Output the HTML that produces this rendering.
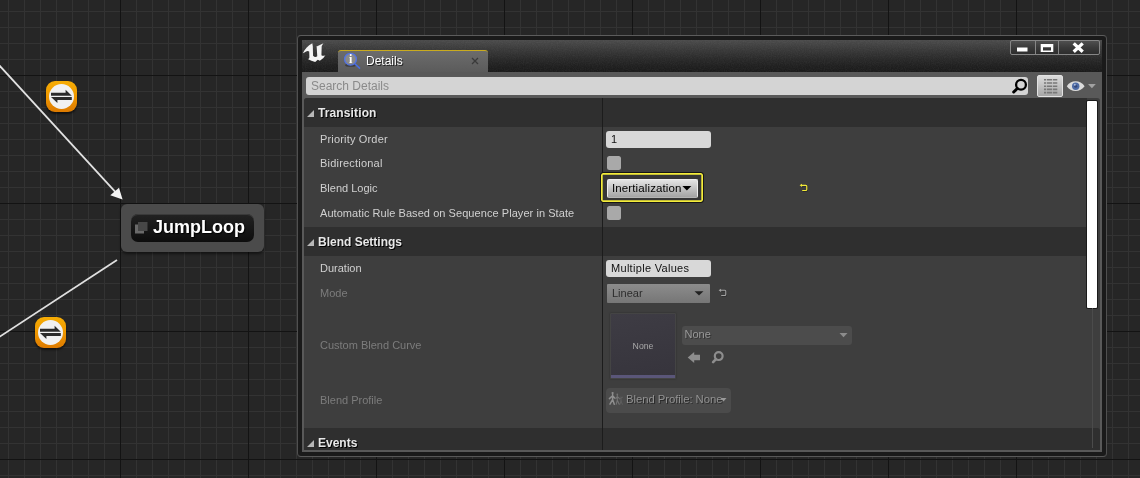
<!DOCTYPE html>
<html lang="en">
<head>
<meta charset="utf-8">
<title>Details</title>
<style>
*{box-sizing:border-box;margin:0;padding:0}
html,body{width:1140px;height:478px;overflow:hidden;background:#262626}
body{position:relative;font-family:"Liberation Sans",sans-serif;font-size:11px;color:#d6d6d6}
.abs{position:absolute}
#root{position:absolute;left:0;top:0;width:1140px;height:478px;overflow:hidden;will-change:transform}
#graph{position:absolute;left:0;top:0;width:1140px;height:478px;
 background-color:#262626;
 background-image:
  linear-gradient(to right,#131313 1px,transparent 1px),
  linear-gradient(to bottom,#131313 1px,transparent 1px),
  linear-gradient(to right,#333 1px,transparent 1px),
  linear-gradient(to bottom,#333 1px,transparent 1px);
 background-size:128px 128px,128px 128px,16px 16px,16px 16px;
 background-position:120px 0,0 75px,8px 0,0 11px;}
#wires{position:absolute;left:0;top:0}
.trans{position:absolute;width:31px;height:31px;border-radius:9px;
 background:linear-gradient(#f6ad05,#f09a00 45%,#dd7a00);box-shadow:0 2px 2px rgba(0,0,0,.55)}
.trans i{position:absolute;left:3px;top:3px;width:25px;height:25px;border-radius:50%;background:#f1f1f1}
.trans svg{position:absolute;left:0;top:0}
#node{position:absolute;left:121px;top:204px;width:143px;height:48px;border-radius:6px;background:#4b4b4b;box-shadow:0 2px 3px rgba(0,0,0,.5)}
#node .in{position:absolute;left:10px;top:10px;width:123px;height:28px;border-radius:7px;
 background:linear-gradient(#222,#0d0d0d);box-shadow:inset 0 1px 0 #3a3a3a}
#node .t{position:absolute;left:32px;top:11px;font-weight:bold;font-size:18px;line-height:24px;color:#fff;text-shadow:1px 1px 1px #000;white-space:nowrap}

#win{position:absolute;left:297px;top:35px;width:810px;height:422px;border:1px solid #505050;border-top-color:#5c5c5c;border-bottom-color:#585858;border-radius:4px;background:#1a1a1a}
#title{position:absolute;left:302px;top:40px;width:800px;height:32px;
 background:linear-gradient(#4b4b4b 0,#3a3a3a 9px,#292929 19px,#1e1e1e 27px,#1b1b1b 32px)}
#tab{position:absolute;left:338px;top:50px;width:150px;height:22px;border-radius:3px 3px 0 0;
 background:linear-gradient(#6c6c6c,#5b5b5b);border-top:1px solid #c9ab1f}
#tab .t{position:absolute;left:28px;top:3px;font-size:12px;line-height:14px;color:#fff;text-shadow:1px 1px 0 #222}
#content{position:absolute;left:302px;top:72px;width:800px;height:380px;background:#595959}
#search{position:absolute;left:306px;top:77px;width:722px;height:18px;border-radius:3px;background:#d4d4d4}
#search .t{position:absolute;left:5px;top:2px;font-size:12px;line-height:14px;color:#8a8a8a}
#table{position:absolute;left:304px;top:98px;width:796px;height:352px;background:#3e3e3e;border-radius:3px 3px 0 0;overflow:hidden}
#tin{position:absolute;left:0;top:1px;width:796px;height:351px}
.hdr{position:absolute;left:0;width:796px;background:#2f2f2f}
.hdr .t{position:absolute;left:14px;font-weight:bold;font-size:12px;line-height:16px;color:#e8e8e8;text-shadow:1px 1px 0 #000;white-space:nowrap}
.hdr .tri{position:absolute;left:3px;width:0;height:0;border-left:7px solid transparent;border-bottom:7px solid #b8b8b8}
.lbl{position:absolute;left:16px;font-size:11px;line-height:14px;color:#d0d0d0;white-space:nowrap}
.lbl.dis{color:#7c7c7c}
#divider{position:absolute;left:298px;top:-1px;width:1px;height:352px;background:#1c1c1c}
.inp{position:absolute;left:302px;width:105px;height:17px;border-radius:3px;background:#d8d8d8;color:#111;font-size:11px;line-height:17px;padding-left:5px;white-space:nowrap}
.chk{position:absolute;left:303px;width:14px;height:14px;border-radius:2.500px;background:#a9a9a9}

.wb{position:absolute;top:40px;height:15px;border:1px solid #868686;border-radius:2px;background:linear-gradient(#4f4f4f,#3a3a3a 50%,#2d2d2d)}
#lv{position:absolute;left:1037px;top:75px;width:26px;height:22px;border-radius:2px;border:1px solid #e2e2e2;background:linear-gradient(#dcdcdc,#a6a6a6)}
#sbar{position:absolute;left:783px;top:2px;width:10px;height:207px;background:#fff;border-radius:1px;box-shadow:0 0 0 1px #1a1a1a}
#strack{position:absolute;left:788px;top:209px;width:1px;height:140px;background:#4b4b4b;z-index:2}
#focus{position:absolute;left:296px;top:73px;width:104px;height:31px;border-radius:3px;background:#363636;border:1px solid #161616;box-shadow:inset 0 0 0 1.700px #f4ec3a}
#combo1{position:absolute;left:303px;top:80px;width:91px;height:19px;border-radius:2px;border:1px solid #ededed;border-bottom-color:#b5b5b5;background:linear-gradient(#e4e4e4,#a4a4a4);color:#000;font-size:11.5px;line-height:17px;padding-left:4px;letter-spacing:.12px;white-space:nowrap}
#combo2{position:absolute;left:303px;top:185px;width:103px;height:19px;border-radius:1px;background:linear-gradient(#8c8c8c,#767676);color:#2c2c2c;font-size:11px;line-height:19px;padding-left:5px;white-space:nowrap}
#thumb{position:absolute;left:306px;top:214px;width:66px;height:66px;background:#444;border-radius:1px;box-shadow:0 0 2px rgba(0,0,0,.35)}
#thumb .in{position:absolute;left:1px;top:1px;width:64px;height:64px;background:linear-gradient(170deg,#3e3c44,#36343c);}
#thumb .bar{position:absolute;left:1px;top:61.700px;width:64px;height:3.300px;background:#5a5679}
#thumb .t{position:absolute;left:0;top:27px;width:66px;text-align:center;font-size:8.700px;line-height:12px;color:#a9a9a9}
#combo3{position:absolute;left:378px;top:227px;width:170px;height:19px;border-radius:3px;background:#4c4c4c;color:#999;font-size:11px;line-height:17px;padding-left:2.500px;text-shadow:1px 1px 0 #333}
#bp{position:absolute;left:302px;top:289px;width:125px;height:25px;border-radius:4px;background:#4b4b4b;color:#929292;font-size:11.300px;letter-spacing:-.05px;line-height:22px;padding-left:20px;white-space:nowrap;text-shadow:1px 1px 0 #2a2a2a}
</style>
</head>
<body>
<div id="root">
<div id="graph"></div>
<svg id="wires" width="1140" height="478" viewBox="0 0 1140 478">
 <line x1="-1" y1="65" x2="116" y2="192.600" stroke="#e2e2e2" stroke-width="1.750"/>
 <polygon points="122.600,199.600 110.300,195.200 119,187.700" fill="#f4f4f4"/>
 <line x1="-1" y1="337.200" x2="117" y2="260" stroke="#e0e0e0" stroke-width="1.750"/>
</svg>

<div class="trans" style="left:46px;top:81px"><i></i>
 <svg width="31" height="31" viewBox="0 0 31 31"><path d="M5 11.800H19.600V8.800L25.800 14.800H5Z M25.800 16.100V19H11.400V21.900L5 16.100Z" fill="#2b2b2b"/></svg>
</div>
<div class="trans" style="left:35px;top:317px"><i></i>
 <svg width="31" height="31" viewBox="0 0 31 31"><path d="M5 11.800H19.600V8.800L25.800 14.800H5Z M25.800 16.100V19H11.400V21.900L5 16.100Z" fill="#2b2b2b"/></svg>
</div>

<div id="node">
 <div class="in"></div>
 <svg class="abs" style="left:14px;top:18px" width="13" height="12" viewBox="0 0 13 12"><rect x="0" y="2.500" width="9" height="9" fill="#6a6a6a"/><rect x="3" y="0" width="9.500" height="9" fill="#474747"/></svg>
 <div class="t">JumpLoop</div>
</div>

<div id="win"></div>
<div id="title"></div>
<svg class="abs" style="left:302px;top:40px" width="800" height="32" viewBox="0 0 800 32"><filter id="nz" x="0" y="0" width="100%" height="100%"><feTurbulence type="fractalNoise" baseFrequency="0.850" numOctaves="2" seed="3"/><feColorMatrix type="matrix" values="0 0 0 0 1  0 0 0 0 1  0 0 0 0 1  1.400 0 0 0 -0.450"/></filter><rect width="800" height="32" filter="url(#nz)" opacity=".06"/></svg>
<div id="tab"><div class="t">Details</div></div>

<svg class="abs" style="left:300px;top:40px" width="30" height="25" viewBox="0 0 574 478">
 <path d="M55,255 C85,180 150,105 235,62 L245,120 L250,300 Q290,345 330,310 L320,140 L310,130 Q380,95 450,62 Q420,100 415,120 L410,290 Q440,315 485,290 Q450,360 380,395 L340,380 L290,420 Q215,400 155,370 Q180,350 180,330 L176,222 Q150,195 115,220 Q85,238 55,255 Z" fill="#f4f4f4"/>
</svg>
<svg class="abs" style="left:338px;top:48px" width="30" height="25" viewBox="0 0 30 25">
 <ellipse cx="12.600" cy="17.200" rx="5.500" ry="1.600" fill="#222" opacity=".55"/>
 <circle cx="12.500" cy="11.200" r="5.900" fill="#8a8a8a" stroke="#5273e6" stroke-width="1.300"/>
 <path d="M16.900 15.900L21.600 20.100" stroke="#4a6de0" stroke-width="1.500" stroke-linecap="round"/>
 <text x="12.600" y="15.300" font-family="Liberation Serif, serif" font-weight="bold" font-size="12" fill="#fff" text-anchor="middle">i</text>
</svg>
<svg class="abs" style="left:471px;top:57px" width="8" height="8" viewBox="0 0 8 8"><path d="M1 1L7 7M7 1L1 7" stroke="#3a3a3a" stroke-width="1.250"/></svg>
<div id="content"></div>
<div id="search"><div class="t">Search Details</div></div>


<div class="wb" style="left:1010px;width:26px;border-radius:2px 0 0 2px"></div>
<div class="wb" style="left:1035px;width:24px;border-radius:0"></div>
<div class="wb" style="left:1058px;width:42px;border-radius:0 2px 2px 0"></div>
<svg class="abs" style="left:1010px;top:40px" width="90" height="15" viewBox="0 0 90 15">
 <rect x="7" y="7.500" width="10.500" height="4" fill="#fff"/>
 <path d="M30.700 4H43.300V12H30.700Z M33 7.200V10.400H41V7.200Z" fill="#fff" fill-rule="evenodd"/>
 <path d="M63.700 3.400L72.700 11.800M72.700 3.400L63.700 11.800" stroke="#fff" stroke-width="3.300" fill="none"/>
</svg>
<svg class="abs" style="left:1010px;top:76px" width="20" height="20" viewBox="0 0 20 20">
 <circle cx="11" cy="8.700" r="4.900" fill="none" stroke="#000" stroke-width="2.300"/>
 <path d="M7.300 12.500L3.700 16" stroke="#000" stroke-width="3" stroke-linecap="round"/>
</svg>
<div id="lv"></div>
<svg class="abs" style="left:1037px;top:75px" width="26" height="22" viewBox="0 0 26 22">
 <g fill="#787878">
  <path d="M7 4h2.200v1.600H7zM10 4h5v1.600h-5zM15.800 4h4.500v1.600h-4.500z"/>
  <path d="M7 7.200h2.200v1.600H7zM10 7.200h5v1.600h-5zM15.800 7.200h4.500v1.600h-4.500z"/>
  <path d="M7 10.400h2.200v1.600H7zM10 10.400h5v1.600h-5zM15.800 10.400h4.500v1.600h-4.500z"/>
  <path d="M7 13.600h2.200v1.600H7zM10 13.600h5v1.600h-5zM15.800 13.600h4.500v1.600h-4.500z"/>
  <path d="M7 16.800h2.200v1.600H7zM10 16.800h5v1.600h-5zM15.800 16.800h4.500v1.600h-4.500z"/>
 </g>
</svg>
<svg class="abs" style="left:1066px;top:78px" width="32" height="16" viewBox="0 0 32 16">
 <path d="M0.800 8.300C4.500 1.600 14.500 1.600 18.600 8.300C14.500 14.600 4.500 14.600 0.800 8.300Z" fill="#dcdcdc"/>
 <circle cx="9.700" cy="8.200" r="3.700" fill="#4f6ca6"/>
 <circle cx="9.700" cy="8.200" r="1.500" fill="#34497a"/>
 <circle cx="8.800" cy="6.800" r="1" fill="#a9b9da"/>
 <path d="M22 6.100h7.800l-3.900 4.100z" fill="#a2a2a2"/>
</svg>

<div id="table"><div id="tin">
 <div class="hdr" style="top:-1px;height:29px;width:783px"><div class="tri" style="top:12px"></div><div class="t" style="top:7px;letter-spacing:.12px">Transition</div></div>
 <div class="lbl" style="top:33px;letter-spacing:.17px">Priority Order</div>
 <div class="lbl" style="top:57px;letter-spacing:.2px">Bidirectional</div>
 <div class="lbl" style="top:82px">Blend Logic</div>
 <div class="lbl" style="top:107px;letter-spacing:.06px">Automatic Rule Based on Sequence Player in State</div>
 <div class="hdr" style="top:128px;height:29px;width:783px"><div class="tri" style="top:12px"></div><div class="t" style="top:7px">Blend Settings</div></div>
 <div class="lbl" style="top:162px">Duration</div>
 <div class="lbl dis" style="top:187px">Mode</div>
 <div class="lbl dis" style="top:239px">Custom Blend Curve</div>
 <div class="lbl dis" style="top:294px">Blend Profile</div>
 <div class="hdr" style="top:329px;height:22px;border-radius:0 3px 0 0"><div class="tri" style="top:12px"></div><div class="t" style="top:7px">Events</div></div>
 <div id="divider"></div>
 <div class="inp" style="top:32px">1</div>
 <div class="chk" style="top:57px"></div>
 <div class="chk" style="top:107px"></div>
 <div class="inp" style="top:161px;letter-spacing:.3px">Multiple Values</div>

 <div id="focus"></div>
 <div id="combo1">Inertialization</div>
 <svg class="abs" style="left:378px;top:87px" width="10" height="6" viewBox="0 0 10 6"><path d="M0.400 0.100h9L4.900 4.400z" fill="#000"/></svg>
 <svg class="abs" style="left:495px;top:84px" width="10" height="10" viewBox="0 0 10 10"><g transform="translate(.6 .6)" opacity=".55"><path d="M2.800 2.300H6.800Q7.800 2.300 7.800 3.300V6.500Q7.800 7.500 6.800 7.500H3.200" fill="none" stroke="#111" stroke-width="1.200"/><path d="M0.600 2.300L3 .7L3.100 3.900Z" fill="#111"/></g><path d="M2.800 2.300H6.800Q7.800 2.300 7.800 3.300V6.500Q7.800 7.500 6.800 7.500H3.200" fill="none" stroke="#f3eb38" stroke-width="1.200"/><path d="M0.600 2.300L3 .7L3.100 3.900Z" fill="#f3eb38"/></svg>
 <div id="combo2">Linear</div>
 <svg class="abs" style="left:390px;top:192px" width="10" height="6" viewBox="0 0 10 6"><path d="M0.500 0.200h9L5 4.600z" fill="#222"/></svg>
 <svg class="abs" style="left:414px;top:189px" width="10" height="10" viewBox="0 0 10 10"><g transform="translate(.6 .6)" opacity=".4"><path d="M2.800 2.300H6.800Q7.800 2.300 7.800 3.300V6.500Q7.800 7.500 6.800 7.500H3.200" fill="none" stroke="#111" stroke-width="1.100"/></g><path d="M2.800 2.300H6.800Q7.800 2.300 7.800 3.300V6.500Q7.800 7.500 6.800 7.500H3.200" fill="none" stroke="#a3a3a3" stroke-width="1.100"/><path d="M0.600 2.300L3 .7L3.100 3.900Z" fill="#a3a3a3"/></svg>
 <div id="thumb"><div class="in"></div><div class="bar"></div><div class="t">None</div></div>
 <div id="combo3">None</div>
 <svg class="abs" style="left:535px;top:234px" width="9" height="5" viewBox="0 0 9 5"><path d="M0.500 0h8L4.500 4.300z" fill="#8c8c8c"/></svg>
 <svg class="abs" style="left:383px;top:252px" width="40" height="13" viewBox="0 0 40 13">
  <path d="M0.700 6.500L7.200 0.900V3.700H13V9.200H7.200V12Z" fill="#8d8d8d"/>
  <circle cx="31.700" cy="5.100" r="3.900" fill="none" stroke="#8d8d8d" stroke-width="2.200"/>
  <path d="M28.700 8.300L26.100 11.100" stroke="#8d8d8d" stroke-width="2.600" stroke-linecap="round"/>
 </svg>
 <div id="bp">Blend Profile: None</div>
 <svg class="abs" style="left:416px;top:299px" width="7" height="4" viewBox="0 0 7 4"><path d="M0.500 0h6L3.500 3.500z" fill="#9a9a9a"/></svg>
 <svg class="abs" style="left:304px;top:292px" width="16" height="16" viewBox="0 0 16 16" fill="none" stroke-linecap="round">
  <g stroke="#5e5e5e" stroke-width="1"><path d="M13 6V10M13 10L12 13.300M13 10L14.300 13.300M11.800 8.300L13 7L14.600 6.200"/></g>
  <g stroke="#747474" stroke-width="1.100"><circle cx="9.300" cy="3.300" r=".9" fill="#747474" stroke="none"/><path d="M9.300 4.300V9.200M9.300 9.200L8.200 13.300M9.300 9.200L11.200 13.300M7.600 7.600L9.300 5.600L11.300 7.400"/></g>
  <g stroke="#8f8f8f" stroke-width="1.500"><circle cx="4.600" cy="2.100" r="1.150" fill="#8f8f8f" stroke="none"/><path d="M4.600 3.400V8.600M4.600 8.600L2 13.200M4.600 8.600L6.300 13.200M1.400 7.600L4.600 4.800L6.600 7"/></g>
 </svg>
 <div id="sbar"></div><div id="strack"></div>
</div></div>
</div>
</body>
</html>
